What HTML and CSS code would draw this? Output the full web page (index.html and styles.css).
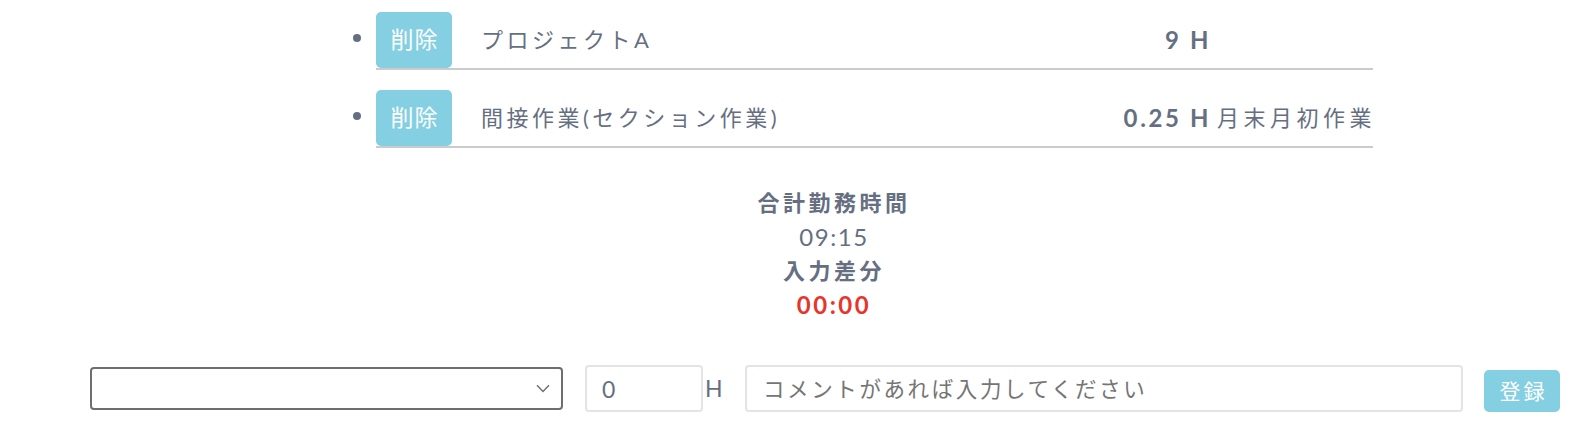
FILE: index.html
```html
<!DOCTYPE html>
<html lang="ja">
<head>
<meta charset="utf-8">
<title>作業入力</title>
<link rel="stylesheet" href="styles.css">
</head>
<body>
<ul class="work-list">
  <li class="work-item">
    <div class="work-row">
      <button class="btn-del" type="button">削除</button>
      <span class="work-name">プロジェクトA</span>
      <span class="work-hours">9 H</span>
      <span class="work-note"></span>
    </div>
  </li>
  <li class="work-item">
    <div class="work-row">
      <button class="btn-del" type="button">削除</button>
      <span class="work-name">間接作業(セクション作業)</span>
      <span class="work-hours">0.25 H</span>
      <span class="work-note">月末月初作業</span>
    </div>
  </li>
</ul>

<div class="totals">
  <div class="totals-label">合計勤務時間</div>
  <div class="totals-value">09:15</div>
  <div class="totals-label">入力差分</div>
  <div class="totals-diff">00:00</div>
</div>

<form class="entry">
  <span class="select-wrap">
    <select class="entry-select"><option></option></select>
    <svg class="chevron" width="14" height="9" viewBox="0 0 14 9"><path d="M1 1.2 L7 7.6 L13 1.2" fill="none" stroke="#6e6e6e" stroke-width="1.4"/></svg>
  </span>
  <input class="entry-hours" type="text" value="0">
  <span class="entry-unit">H</span>
  <input class="entry-comment" type="text" placeholder="コメントがあれば入力してください">
  <button class="btn-submit" type="button">登録</button>
</form>
</body>
</html>
```
FILE: styles.css
```css
html, body {
  margin: 0;
  padding: 0;
  background: #ffffff;
}
body {
  font-family: Lato, "Noto Sans CJK JP", sans-serif;
  color: #666f82;
  overflow: hidden;
}

.work-list {
  list-style: none;
  margin: 0;
  padding: 12px 223px 0 353px;
}
.work-item {
  display: flex;
  align-items: flex-start;
  margin-bottom: 20px;
}
.work-item:last-child {
  margin-bottom: 0;
}
.work-item::before {
  content: "";
  flex: none;
  width: 8px;
  height: 8px;
  border-radius: 50%;
  background: #666f82;
  margin-top: 22px;
  margin-right: 15px;
}
.work-row {
  flex: 1;
  display: flex;
  align-items: center;
  border-bottom: 2px solid #cbcbcb;
  font-size: 22px;
  letter-spacing: 3.5px;
  white-space: nowrap;
}
.btn-del {
  flex: none;
  width: 76px;
  height: 56px;
  border: none;
  border-radius: 5px;
  background: #84d0e2;
  color: #ffffff;
  font-family: Lato, "Noto Sans CJK JP", sans-serif;
  font-size: 23px;
  letter-spacing: 1px;
  padding: 0 0 5px 1px;
}
.work-name {
  flex: 1;
  margin-left: 29px;
  padding-bottom: 4px;
}
.work-hours {
  font-weight: 700;
  font-size: 24px;
  letter-spacing: 2.6px;
  text-align: right;
  padding-bottom: 2px;
}
.work-note {
  flex: none;
  width: 156px;
  margin-left: 6px;
  letter-spacing: 4.5px;
  padding-bottom: 4px;
  overflow: visible;
}

.totals {
  padding: 38px 0 0 72px;
  text-align: center;
  font-size: 22px;
  line-height: 34px;
  letter-spacing: 3.5px;
}
.totals-label {
  font-weight: 700;
}
.totals-value {
  font-size: 24px;
  letter-spacing: 1.6px;
}
.totals-diff {
  font-weight: 700;
  font-size: 24px;
  letter-spacing: 2.5px;
  color: #e8352b;
}

.entry {
  display: flex;
  align-items: center;
  margin: 43px 0 0 0;
  padding-left: 90px;
}
.select-wrap {
  position: relative;
  display: block;
  flex: none;
}
.entry-select {
  display: block;
  box-sizing: border-box;
  width: 473px;
  height: 43px;
  border: 2px solid #6e6e6e;
  border-radius: 4px;
  background: #ffffff;
  appearance: none;
  -webkit-appearance: none;
  font-size: 20px;
}
.chevron {
  position: absolute;
  right: 13px;
  top: 17px;
}
.entry-hours,
.entry-comment {
  box-sizing: border-box;
  height: 47px;
  border: 2px solid #e1e4e8;
  border-radius: 4px;
  background: #ffffff;
  font-family: Lato, "Noto Sans CJK JP", sans-serif;
  font-size: 21px;
  letter-spacing: 2.6px;
  color: #666f82;
  outline: none;
}
.entry-hours {
  width: 118px;
  margin-left: 22px;
  padding: 0 0 0 15px;
  font-size: 23px;
}
.entry-unit {
  width: 18px;
  margin-left: 2px;
  font-size: 23px;
  padding-bottom: 2px;
}
.entry-comment {
  width: 718px;
  margin-left: 22px;
  padding: 0 0 0 16px;
  font-size: 21.5px;
}
.entry-comment::placeholder {
  color: #757575;
  opacity: 1;
}
.btn-submit {
  align-self: flex-end;
  box-sizing: border-box;
  width: 76px;
  height: 42px;
  margin-left: 21px;
  border: none;
  border-radius: 5px;
  background: #84d0e2;
  color: #ffffff;
  font-family: Lato, "Noto Sans CJK JP", sans-serif;
  font-size: 21px;
  letter-spacing: 3px;
  padding: 0 0 2px 3px;
}
```
